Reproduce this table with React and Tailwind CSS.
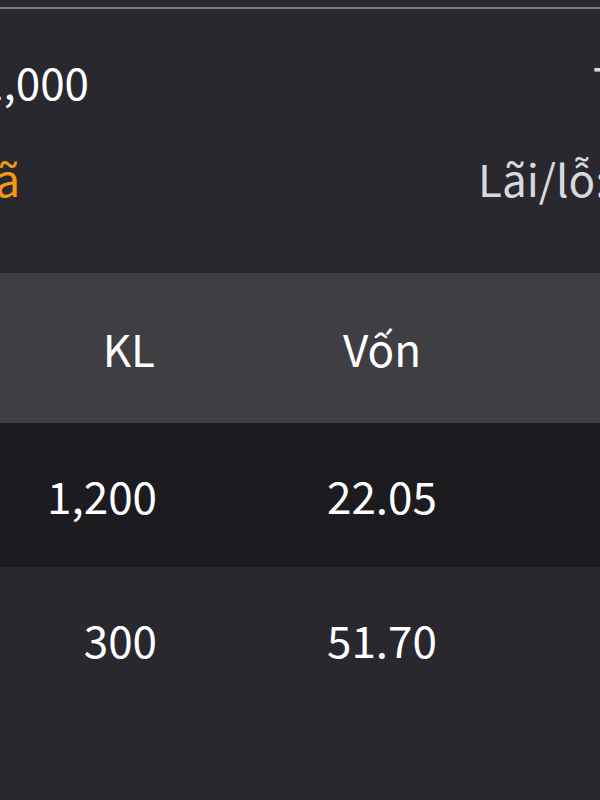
import React from 'react';

const rows = [
    { kl: '1,200', von: '22.05', bg: 'bg-[#1c1b20]' },
    { kl: '300', von: '51.70', bg: 'bg-[#29282e]' },
];

const App = () => {
    return (
        <div
            className="w-[600px] h-[800px] overflow-hidden bg-[#29282e] text-white"
            style={{ fontFamily: '"Noto Sans CJK SC", "Noto Sans", sans-serif' }}
        >
            <div className="h-[7px]" />
            <div className="h-[2px] bg-[#7c7b82]" />

            {/* tong quan */}
            <div className="pt-[42px] text-[44px]">
                <div className="flex h-[60px] items-center whitespace-nowrap">
                    <div className="w-[89px] flex justify-end">
                        <span>1,000</span>
                    </div>
                    <div className="ml-[504px] text-[#d9d9dd]">Tổng:</div>
                </div>
                <div className="flex h-[60px] mt-[37px] items-center whitespace-nowrap">
                    <div className="w-[20px] flex justify-end">
                        <span className="text-[#f39a12]">Mã</span>
                    </div>
                    <div className="ml-[458px] text-[#d9d9dd]">Lãi/lỗ: +1,250,000</div>
                </div>
            </div>

            {/* bang */}
            <div className="mt-[65px] text-[44px]">
                <div className="grid grid-cols-[157px_450px] h-[150px] items-center bg-[#3e3e43] whitespace-nowrap">
                    <div className="text-right pr-[2px]">KL</div>
                    <div className="text-center">Vốn</div>
                </div>
                {rows.map((r) => (
                    <div
                        key={r.kl}
                        className={`grid grid-cols-[157px_450px] h-[144px] items-center whitespace-nowrap ${r.bg}`}
                    >
                        <div className="text-right">{r.kl}</div>
                        <div className="text-center">{r.von}</div>
                    </div>
                ))}
            </div>
        </div>
    );
};

export default App;
